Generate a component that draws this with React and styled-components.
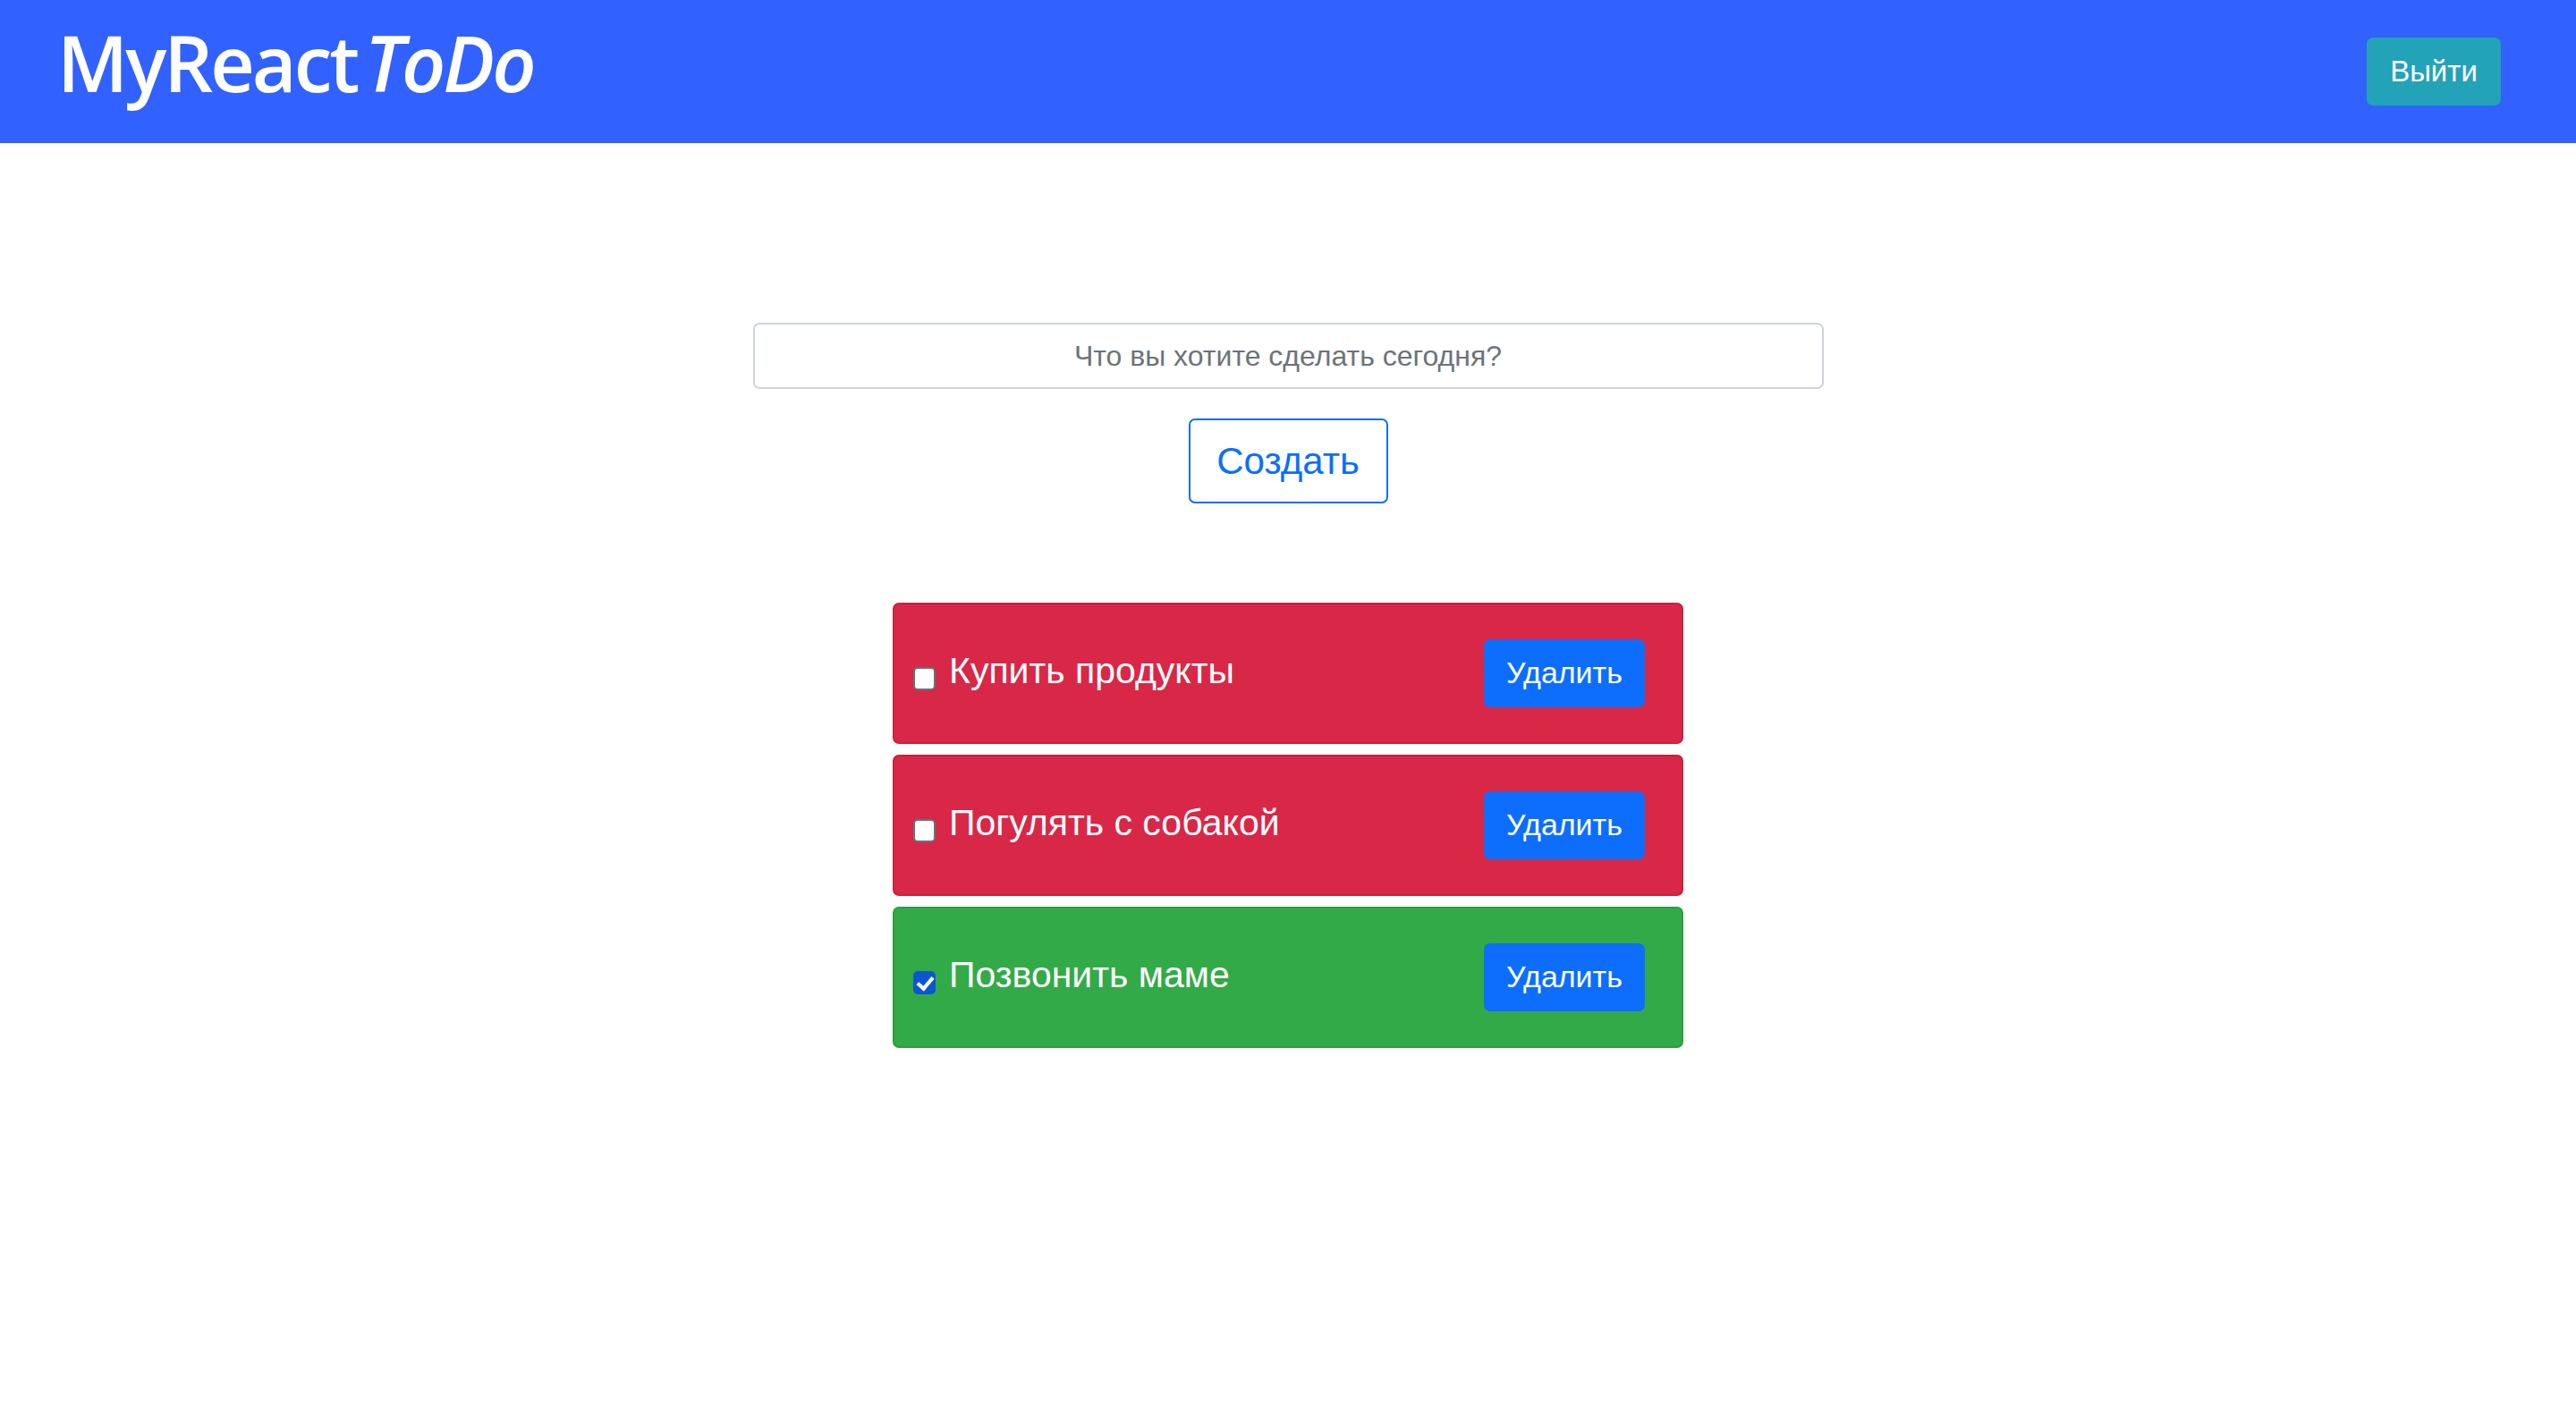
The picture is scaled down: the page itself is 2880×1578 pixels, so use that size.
import React, { useState } from "react";
import styled, { createGlobalStyle } from "styled-components";

const GlobalStyle = createGlobalStyle`
  body {
    margin: 0;
    background: #ffffff;
    font-family: "Liberation Sans", Arial, sans-serif;
  }
  * {
    box-sizing: border-box;
  }
`;

const initialTodos = [
  { id: 1, title: "Купить продукты", done: false },
  { id: 2, title: "Погулять с собакой", done: false },
  { id: 3, title: "Позвонить маме", done: true },
];

function App() {
  const [todos, setTodos] = useState(initialTodos);
  const [text, setText] = useState("");

  const toggle = (id) =>
    setTodos(todos.map((t) => (t.id === id ? { ...t, done: !t.done } : t)));
  const remove = (id) => setTodos(todos.filter((t) => t.id !== id));
  const create = () => {
    if (!text.trim()) return;
    setTodos([...todos, { id: Date.now(), title: text, done: false }]);
    setText("");
  };

  return (
    <>
      <GlobalStyle />
      <Header>
        <Logo>
          MyReact <em>ToDo</em>
        </Logo>
        <LogoutButton>Выйти</LogoutButton>
      </Header>
      <Main>
        <TaskInput
          placeholder="Что вы хотите сделать сегодня?"
          value={text}
          onChange={(e) => setText(e.target.value)}
        />
        <CreateButton onClick={create}>Создать</CreateButton>
        <List>
          {todos.map((todo) => (
            <TodoCard key={todo.id} $done={todo.done}>
              <TodoLabel>
                <Check
                  type="checkbox"
                  checked={todo.done}
                  onChange={() => toggle(todo.id)}
                />
                <TodoTitle>{todo.title}</TodoTitle>
              </TodoLabel>
              <DeleteButton onClick={() => remove(todo.id)}>Удалить</DeleteButton>
            </TodoCard>
          ))}
        </List>
      </Main>
    </>
  );
}

const Header = styled.header`
  height: 160px;
  background: #3161ff;
  display: flex;
  align-items: center;
  justify-content: space-between;
  padding: 0 84px 0 64px;
`;

const Logo = styled.h1`
  margin: 0 0 20px;
  font-family: "Open Sans", sans-serif;
  font-weight: 600;
  font-size: 86px;
  line-height: 1;
  letter-spacing: -3px;
  word-spacing: -11px;
  color: #ffffff;

  em {
    font-style: italic;
  }
`;

const LogoutButton = styled.button`
  width: 150px;
  height: 76px;
  border: none;
  border-radius: 7px;
  background: #22a3b8;
  color: #ffffff;
  font-family: "Liberation Sans", Arial, sans-serif;
  font-size: 33px;
  cursor: pointer;
`;

const Main = styled.main`
  display: flex;
  flex-direction: column;
  align-items: center;
  padding-top: 201px;
`;

const TaskInput = styled.input`
  width: 1197px;
  height: 74px;
  border: 2px solid #ced4da;
  border-radius: 7px;
  text-align: center;
  font-family: "Liberation Sans", Arial, sans-serif;
  font-size: 32px;
  color: #212529;
  outline: none;

  &::placeholder {
    color: #6c737a;
  }
`;

const CreateButton = styled.button`
  margin-top: 33px;
  width: 223px;
  height: 95px;
  border: 2px solid #0d6efd;
  border-radius: 7px;
  background: #ffffff;
  color: #0d6efd;
  font-family: "Liberation Sans", Arial, sans-serif;
  font-size: 42px;
  cursor: pointer;
`;

const List = styled.div`
  margin-top: 111px;
  display: flex;
  flex-direction: column;
  gap: 12px;
`;

const TodoCard = styled.div`
  width: 884px;
  height: 158px;
  display: flex;
  align-items: center;
  justify-content: space-between;
  padding: 0 41px 0 21px;
  border-radius: 7px;
  border: 2px solid ${(p) => (p.$done ? "#2e9c43" : "#c8213f")};
  background: ${(p) => (p.$done ? "#33aa48" : "#d92747")};
`;

const TodoLabel = styled.label`
  display: flex;
  align-items: center;
  gap: 15px;
`;

const Check = styled.input`
  appearance: none;
  position: relative;
  margin: 12px 0 0;
  width: 25px;
  height: 26px;
  border: 2px solid #6b7075;
  border-radius: 5px;
  background: #ffffff;
  cursor: pointer;

  &:checked {
    background: #0b57d0;
    border-color: #0b57d0;
  }

  &:checked::after {
    content: "";
    position: absolute;
    left: 6px;
    top: 1px;
    width: 7px;
    height: 14px;
    border: solid #ffffff;
    border-width: 0 4px 4px 0;
    transform: rotate(40deg);
  }
`;

const TodoTitle = styled.span`
  margin-top: -6px;
  font-size: 41px;
  color: #ffffff;
`;

const DeleteButton = styled.button`
  width: 180px;
  height: 76px;
  border: none;
  border-radius: 7px;
  background: #0d6efd;
  color: #ffffff;
  font-family: "Liberation Sans", Arial, sans-serif;
  font-size: 34px;
  padding-bottom: 2px;
  cursor: pointer;
`;

export default App;
